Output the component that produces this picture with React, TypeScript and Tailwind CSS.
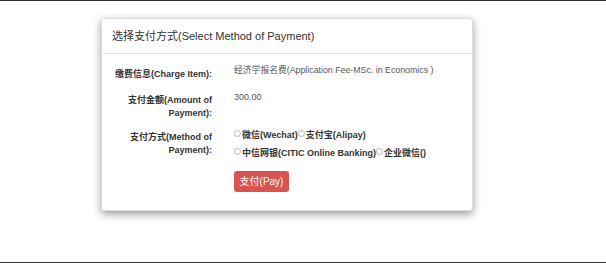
const font = { fontFamily: '"Liberation Sans", Arial, "Noto Sans CJK SC", sans-serif' };

function Radio({ label }: { label: string }) {
  return (
    <span className="inline-flex items-center">
      <span className="mr-[1px] mb-[3px] inline-block h-[7px] w-[7px] rounded-full border border-[#b5b5b5] bg-white" />
      <span className="font-bold text-[#333]">{label}</span>
    </span>
  );
}

export default function App() {
  return (
    <div className="h-[263px] w-[606px] overflow-hidden border-y border-[#333] bg-white" style={font}>
      <div className="ml-[101px] mt-[17px] w-[372px] rounded-[3px] border border-[#ddd] bg-white shadow-[0_3px_9px_rgba(0,0,0,0.4)]">
        <div className="flex h-[35px] items-center border-b border-[#e5e5e5] px-[10px] text-[11px] text-[#333]">
          选择支付方式(Select Method of Payment)
        </div>

        <div className="pl-[4px] pr-[10px] pt-[10px] pb-[18px] text-[9px] leading-[13px]">
          <div className="mb-[10px] flex">
            <div className="w-[106px] shrink-0 pt-[4px] text-right font-bold whitespace-nowrap text-[#333]">缴费信息(Charge Item):</div>
            <div className="ml-[22px] text-[8.8px] text-[#555]">经济学报名费(Application Fee-MSc. in Economics )</div>
          </div>

          <div className="mb-[6px] flex">
            <div className="w-[106px] shrink-0 pt-[3px] text-right font-bold whitespace-nowrap text-[#333]">
              支付金额(Amount of
              <br />
              Payment):
            </div>
            <div className="ml-[22px] text-[#555]">300.00</div>
          </div>

          <div className="flex">
            <div className="w-[106px] shrink-0 pt-[5px] text-right font-bold whitespace-nowrap text-[#333]">
              支付方式(Method of
              <br />
              Payment):
            </div>
            <div className="ml-[22px] flex flex-col leading-[18px]">
              <div className="flex">
                <Radio label="微信(Wechat)" />
                <Radio label="支付宝(Alipay)" />
              </div>
              <div className="flex">
                <Radio label="中信网银(CITIC Online Banking)" />
                <Radio label="企业微信()" />
              </div>
              <div className="mt-[9px]">
                <button className="h-[21px] w-[55px] rounded-[3px] bg-[#d9534f] text-[10px] leading-[21px] text-white">
                  支付(Pay)
                </button>
              </div>
            </div>
          </div>
        </div>
      </div>
    </div>
  );
}
